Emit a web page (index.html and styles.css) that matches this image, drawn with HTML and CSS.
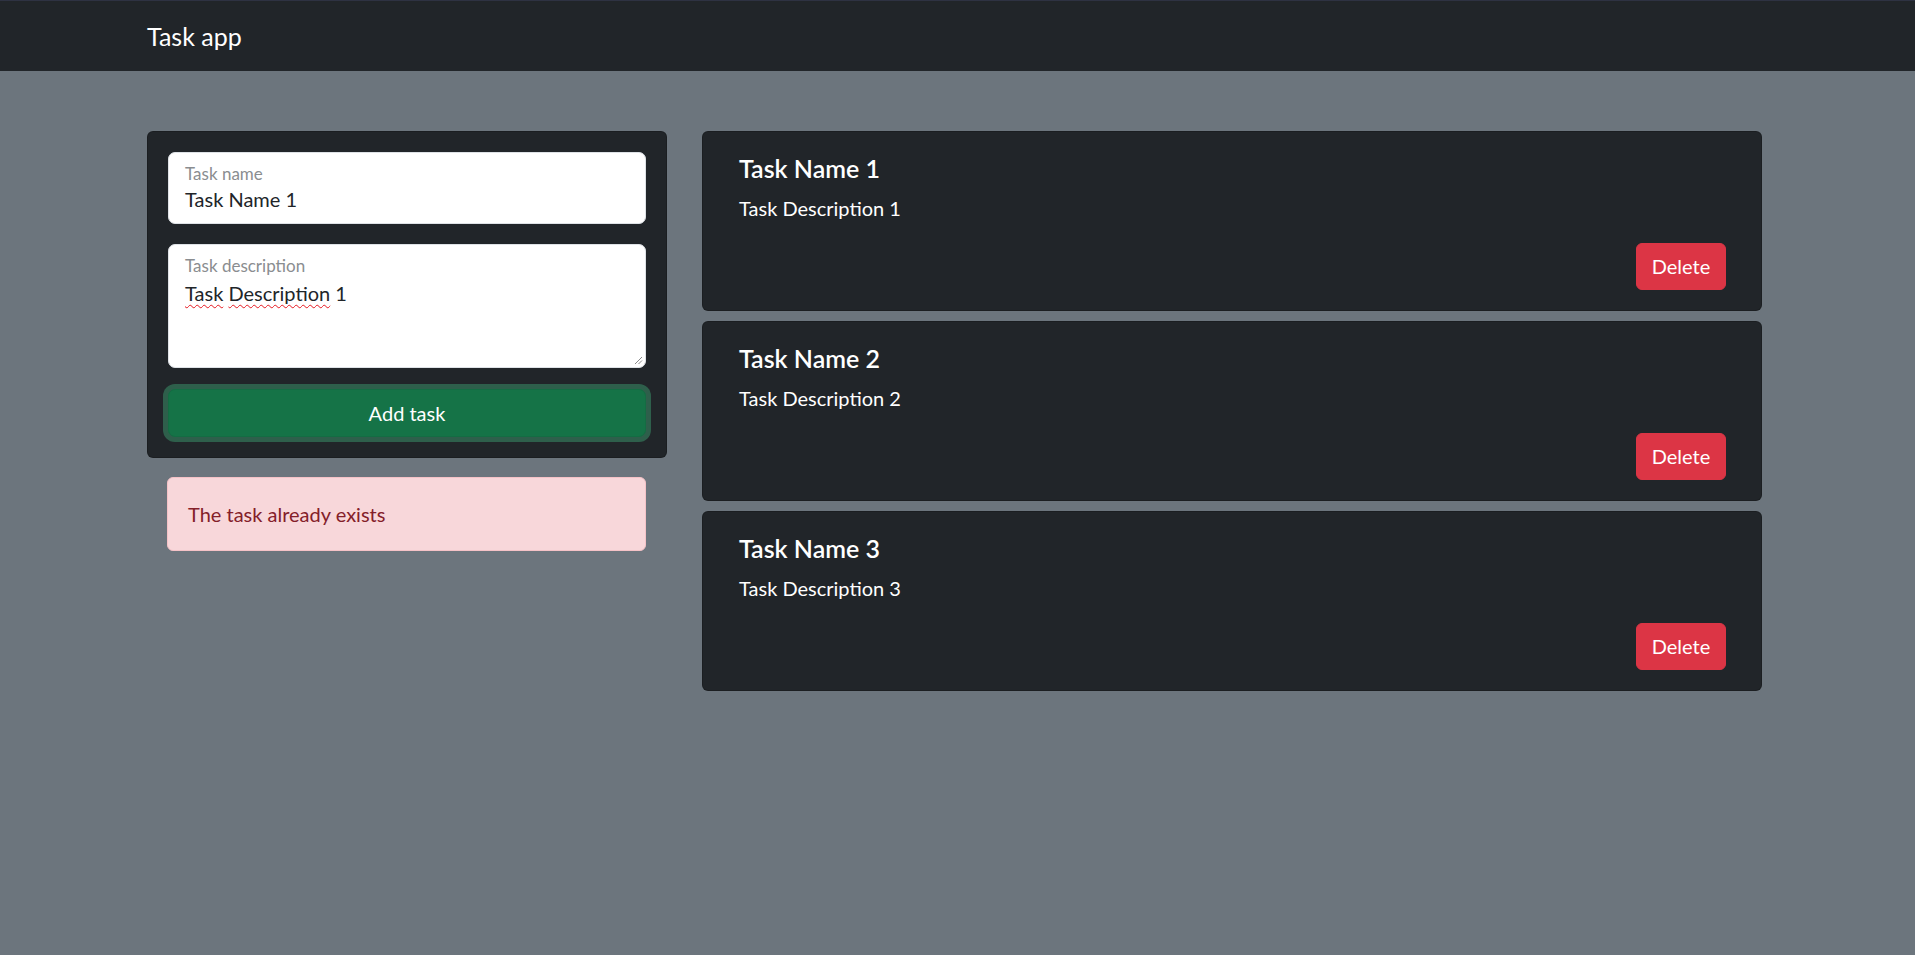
FILE: index.html
```html
<!DOCTYPE html>
<html lang="en">
<head>
<meta charset="utf-8">
<title>Task app</title>
<link rel="stylesheet" href="styles.css">
</head>
<body>
<nav class="navbar">
  <div class="nav-inner"><span class="brand">Task app</span></div>
</nav>
<main class="layout">
  <section class="left-col">
    <form class="form-card">
      <div class="field">
        <span class="field-label">Task name</span>
        <span class="field-value">Task Name 1</span>
      </div>
      <div class="field field-area">
        <span class="field-label">Task description</span>
        <span class="field-value area-value"><span class="misspelled">Task</span> <span class="misspelled">Description</span> 1</span>
        <svg class="grip" width="10" height="10" viewBox="0 0 10 10"><path d="M9 2 L2 9 M9 5.5 L5.5 9" stroke="#8a8a8a" stroke-width="1" fill="none"/></svg>
      </div>
      <button type="button" class="btn-add">Add task</button>
    </form>
    <div class="alert">The task already exists</div>
  </section>
  <section class="tasks">
    <article class="task-card">
      <h5 class="task-title">Task Name 1</h5>
      <p class="task-desc">Task Description 1</p>
      <div class="task-actions"><button type="button" class="btn-delete">Delete</button></div>
    </article>
    <article class="task-card">
      <h5 class="task-title">Task Name 2</h5>
      <p class="task-desc">Task Description 2</p>
      <div class="task-actions"><button type="button" class="btn-delete">Delete</button></div>
    </article>
    <article class="task-card">
      <h5 class="task-title">Task Name 3</h5>
      <p class="task-desc">Task Description 3</p>
      <div class="task-actions"><button type="button" class="btn-delete">Delete</button></div>
    </article>
  </section>
</main>
</body>
</html>
```
FILE: styles.css
```css
* { box-sizing: border-box; }
html, body { margin: 0; padding: 0; }
body {
  background: #6c757d;
  font-family: "Lato", "Open Sans", "Liberation Sans", sans-serif;
  color: #212529;
  min-height: 955px;
}
.navbar {
  background: #212529;
  border-top: 1px solid #2e3242;
  padding: 10px 0;
}
.nav-inner { padding-left: 147px; }
.brand {
  display: inline-block;
  color: #fff;
  font-size: 25px;
  line-height: 37.5px;
  padding: 7.25px 0 5.25px;
}
.layout {
  display: flex;
  align-items: flex-start;
  gap: 35px;
  padding: 60px 0 0 147px;
}
.left-col {
  width: 520px;
  display: flex;
  flex-direction: column;
  gap: 19px;
}
.form-card {
  background: #212529;
  border: 1px solid rgba(0,0,0,.175);
  border-radius: 6px;
  padding: 20px;
  display: flex;
  flex-direction: column;
  margin: 0;
}
.field {
  position: relative;
  background: #fff;
  border: 1px solid #dee2e6;
  border-radius: 7px;
  height: 72px;
  padding: 11px 16px 0;
  margin-bottom: 20px;
  display: flex;
  flex-direction: column;
}
.field-area { height: 124px; margin-bottom: 21px; }
.field-label {
  font-size: 17px;
  line-height: 20px;
  color: #8a8d90;
}
.field-value {
  font-size: 20px;
  line-height: 24px;
  margin-top: 3px;
  color: #212529;
}
.area-value { line-height: 30px; margin-top: 2px; }
.misspelled {
  text-decoration: underline wavy #e5171f;
  text-decoration-thickness: 1px;
  text-underline-offset: 3px;
}
.grip { position: absolute; right: 2px; bottom: 2px; }
.btn-add {
  height: 48px;
  border: 1px solid #146c43;
  border-radius: 7px;
  background: #157347;
  color: #fff;
  font-family: inherit;
  font-size: 20px;
  line-height: 30px;
  box-shadow: 0 0 0 5px rgba(60,153,110,.5);
  padding: 0;
}
.alert {
  margin: 0 21px 0 20px;
  background: #f8d7da;
  border: 1px solid #f5c2c7;
  border-radius: 6px;
  color: #842029;
  font-size: 20px;
  line-height: 30px;
  padding: 21px 20px 20.5px;
}
.tasks {
  width: 1060px;
  display: flex;
  flex-direction: column;
  gap: 10px;
}
.task-card {
  background: #212529;
  border: 1px solid rgba(0,0,0,.175);
  border-radius: 6px;
  padding: 20.5px 35px 20.5px 36px;
  color: #fff;
}
.task-title {
  margin: 0 0 10px;
  font-size: 25px;
  line-height: 30px;
  font-weight: 600;
}
.task-desc {
  margin: 0 0 20px;
  font-size: 20px;
  line-height: 30px;
}
.task-actions { display: flex; justify-content: flex-end; }
.btn-delete {
  width: 90px;
  height: 47px;
  background: #dc3545;
  border: 1px solid #dc3545;
  border-radius: 6px;
  color: #fff;
  font-family: inherit;
  font-size: 20px;
  line-height: 30px;
  padding: 0;
}
```
